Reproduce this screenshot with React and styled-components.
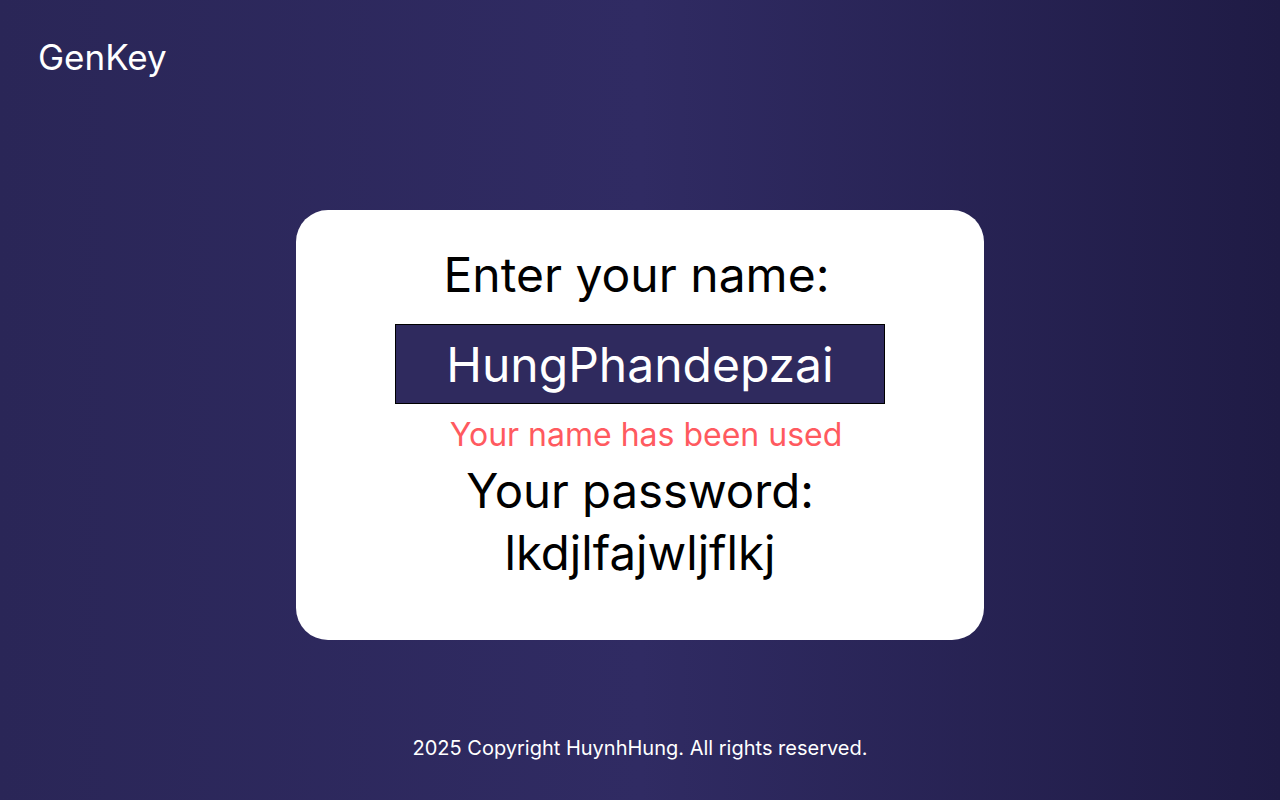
import React from "react";
import styled, { createGlobalStyle } from "styled-components";

const Global = createGlobalStyle`
  html, body { margin: 0; padding: 0; }
  body { font-family: Inter, "Noto Sans", sans-serif; }
  * { box-sizing: border-box; }
`;

const Page = styled.div`
  min-height: 100vh;
  display: flex;
  flex-direction: column;
  background: linear-gradient(to right, #2a2657 0%, #302b63 50%, #1f1b45 100%);
  color: #ffffff;
`;

const Header = styled.header`
  padding: 36px 38px;
`;

const Logo = styled.div`
  font-size: 35px;
  line-height: 42px;
  font-weight: 400;
  color: #ffffff;
`;

const Main = styled.main`
  flex: 1;
  display: flex;
  align-items: center;
  justify-content: center;
`;

const Card = styled.section`
  width: 688px;
  background: #ffffff;
  border-radius: 32px;
  padding: 36px 40px 58px;
  display: flex;
  flex-direction: column;
  align-items: center;
  color: #000000;
`;

const Heading = styled.div`
  font-size: ${(p) => p.$size || 48}px;
  line-height: 58px;
  margin-top: ${(p) => p.$mt || 0}px;
  padding-right: ${(p) => p.$padRight || 0}px;
  color: #000;
`;

const NameInput = styled.input`
  margin-top: 20px;
  width: 490px;
  height: 80px;
  border: 1px solid #000;
  background: #2f2a5e;
  color: #ffffff;
  font-family: Inter, "Noto Sans", sans-serif;
  font-size: 48px;
  text-align: center;
  outline: none;
  padding: 0;
`;

const ErrorText = styled.div`
  margin-top: 12px;
  padding-left: 12px;
  font-size: 32px;
  line-height: 38px;
  color: #ff5a5f;
`;

const Footer = styled.footer`
  padding: 0 0 40px;
  text-align: center;
  font-size: 20px;
  line-height: 24px;
  color: #ffffff;
`;

export default function App() {
  return (
    <>
      <Global />
      <Page>
        <Header>
          <Logo>GenKey</Logo>
        </Header>
        <Main>
          <Card>
            <Heading $padRight={7}>Enter your name:</Heading>
            <NameInput type="text" readOnly value="HungPhandepzai" />
            <ErrorText>Your name has been used</ErrorText>
            <Heading $mt={8} $size={47.3}>Your password:</Heading>
            <Heading $mt={4} $size={47.3}>lkdjlfajwljflkj</Heading>
          </Card>
        </Main>
        <Footer>2025 Copyright HuynhHung. All rights reserved.</Footer>
      </Page>
    </>
  );
}
